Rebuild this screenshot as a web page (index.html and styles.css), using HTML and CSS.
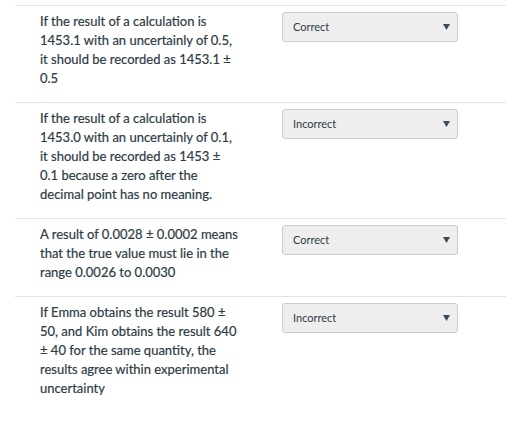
FILE: index.html
```html
<!DOCTYPE html>
<html>
<head>
<meta charset="utf-8">
<link rel="stylesheet" href="styles.css">
</head>
<body>
<div class="list">
  <div class="row">
    <div class="q">If the result of a calculation is 1453.1 with an uncertainly of 0.5, it should be recorded as 1453.1 ± 0.5</div>
    <div class="ans"><div class="select"><span>Correct</span><svg class="arrow" width="7" height="6" viewBox="0 0 7 6"><polygon points="0,0 7,0 3.5,6" /></svg></div></div>
  </div>
  <div class="row">
    <div class="q">If the result of a calculation is 1453.0 with an uncertainly of 0.1, it should be recorded as 1453 ± 0.1 because a zero after the decimal point has no meaning.</div>
    <div class="ans"><div class="select"><span>Incorrect</span><svg class="arrow" width="7" height="6" viewBox="0 0 7 6"><polygon points="0,0 7,0 3.5,6" /></svg></div></div>
  </div>
  <div class="row">
    <div class="q">A result of 0.0028 ± 0.0002 means that the true value must lie in the range 0.0026 to 0.0030</div>
    <div class="ans"><div class="select"><span>Correct</span><svg class="arrow" width="7" height="6" viewBox="0 0 7 6"><polygon points="0,0 7,0 3.5,6" /></svg></div></div>
  </div>
  <div class="row">
    <div class="q">If Emma obtains the result 580 ± 50, and Kim obtains the result 640 ± 40 for the same quantity, the results agree within experimental uncertainty</div>
    <div class="ans"><div class="select"><span>Incorrect</span><svg class="arrow" width="7" height="6" viewBox="0 0 7 6"><polygon points="0,0 7,0 3.5,6" /></svg></div></div>
  </div>
</div>
</body>
</html>
```
FILE: styles.css
```css
html, body {
  margin: 0;
  padding: 0;
  background: #ffffff;
}
body {
  font-family: Lato, "Noto Sans", sans-serif;
  color: #2d3b45;
}
.list {
  margin: 5px 9px 0 15px;
}
.row {
  display: flex;
  align-items: flex-start;
  border-top: 1px solid #e3e3e3;
  padding: 6px 0 14px;
}
.q {
  width: 200px;
  padding-left: 25px;
  font-size: 13px;
  line-height: 19px;
  -webkit-text-stroke: 0.2px #2d3b45;
}
.ans {
  margin-left: 42px;
}
.select {
  width: 176px;
  height: 30px;
  box-sizing: border-box;
  border: 1px solid #c7cdd1;
  border-radius: 3px;
  background: #eeeeee;
  display: flex;
  align-items: center;
  justify-content: space-between;
  padding: 0 7px 2px 10px;
  font-size: 11px;
  color: #2d3b45;
}
.arrow {
  fill: #394b58;
  margin-top: 2px;
}
```
